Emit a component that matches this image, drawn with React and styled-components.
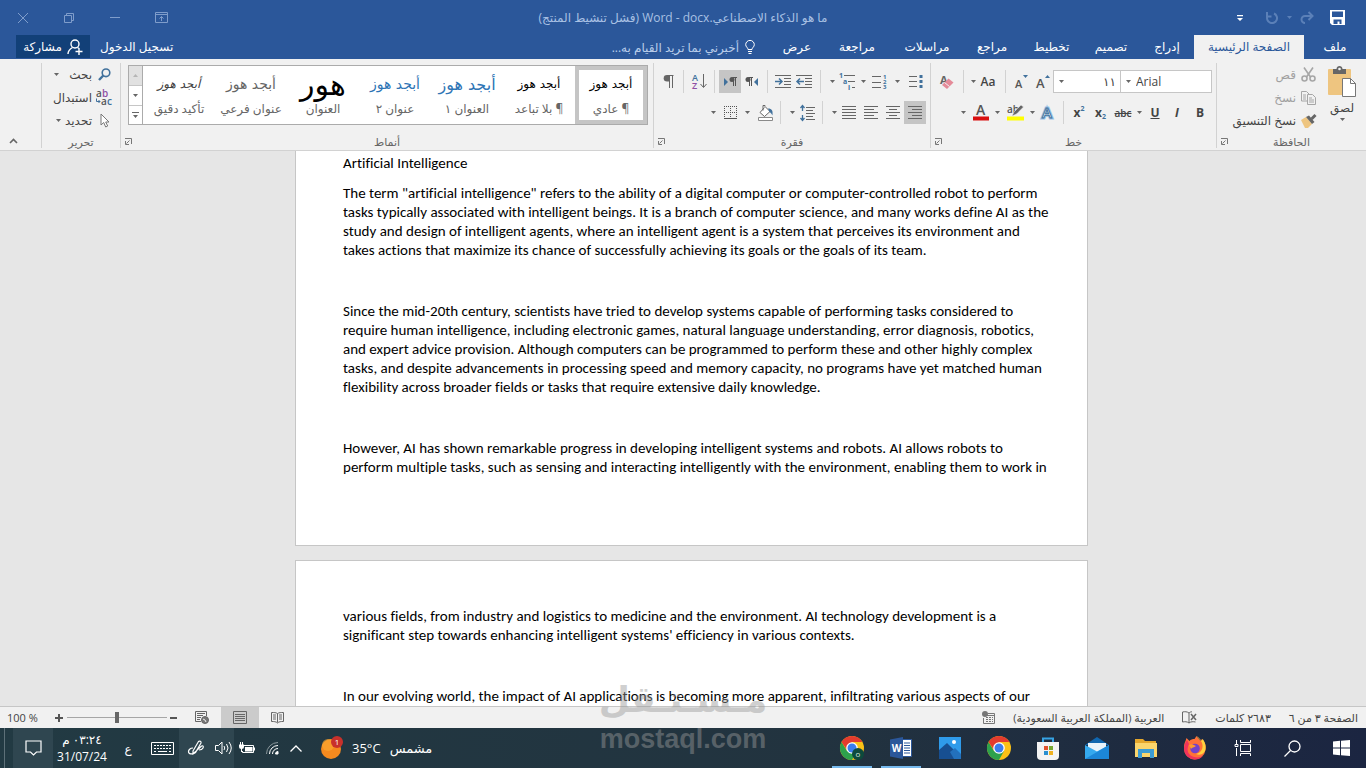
import React from "react";
import styled, { createGlobalStyle, css } from "styled-components";

const GlobalStyle = createGlobalStyle`
  * {
    box-sizing: border-box;
  }

  body {
    margin: 0;
    overflow: hidden;
    font-family: "Open Sans", "DejaVu Sans", sans-serif;
    font-size: 11px;
    color: #444;
  }

  button,
  input,
  select {
    margin: 0;
    padding: 0;
    border: 0;
    background: none;
    color: inherit;
    font: inherit;
  }

  svg {
    display: block;
    flex-shrink: 0;
    overflow: visible;
    direction: ltr;
  }
`;

/* ---------- shared ---------- */

const Arrow = () => (
  <svg width="5" height="3" viewBox="0 0 5 3">
    <path d="M0 0h5L2.5 3z" fill="#666" />
  </svg>
);

const Lines = ({ rows }) => (
  <svg width="16" height="13" viewBox="0 0 16 13" stroke="#666" fill="none">
    {rows.map(([from, to], i) => (
      <path key={i} d={`M${from} ${i * 3 + 0.5}H${to}`} />
    ))}
  </svg>
);

/* ---------- ribbon icons ---------- */

const PasteIcon = () => (
  <svg width="30" height="32" viewBox="0 0 30 32">
    <rect x="1" y="3" width="23" height="26" rx="1" fill="#eec580" />
    <path d="M6 3h3.500c0-4 6-4 6 0H19v5H6z" fill="#666" />
    <circle cx="12.500" cy="3" r="1.300" fill="#f1f1f1" />
    <path d="M15.500 12.500h8l5 5v13h-13z" fill="#fff" stroke="#777" />
    <path d="M23.500 12.500v5h5" fill="none" stroke="#777" />
  </svg>
);

const CutIcon = () => (
  <svg width="15" height="15" viewBox="0 0 15 15" fill="none" stroke="#a6a6a6" strokeWidth="1.600">
    <path d="M3 .5l6.500 9.500M12 .5L5.500 10" />
    <circle cx="3.500" cy="11.500" r="2.500" />
    <circle cx="11.500" cy="11.500" r="2.500" />
  </svg>
);

const CopyIcon = () => (
  <svg width="15" height="14" viewBox="0 0 15 14" fill="#f1f1f1" stroke="#a6a6a6">
    <path d="M.5.500h5l2.500 2.500v7H.5zM2 4h3M2 6h3M2 8h3" />
    <path d="M6.500 3.500h5l3 3v7h-8zM8 7h3M8 9h5M8 11h5" />
  </svg>
);

const BrushIcon = () => (
  <svg width="16" height="14" viewBox="0 0 16 14">
    <path d="M0 6l5-3 6 7-4 4H4z" fill="#eec580" />
    <path d="M5 3l3-1.500 5.500 6.500-2.500 2z" fill="#666" />
    <path d="M10.500 5l4-4" stroke="#666" strokeWidth="3" />
  </svg>
);

const EraserIcon = () => (
  <svg width="15" height="16" viewBox="0 0 15 16">
    <text x="1" y="10" fontSize="11" fontWeight="700" fill="#666">A</text>
    <path d="M9.500 4.500l5 4-6.500 6.500-5-4z" fill="#e48a98" />
    <path d="M5.500 8.500l5 4" stroke="#f1f1f1" />
  </svg>
);

const GrowIcon = ({ shrink }) => (
  <svg width="14" height="15" viewBox="0 0 14 15">
    <text x="0" y="14" fontSize={shrink ? 11 : 13} fontWeight="600" fill="#555">A</text>
    <path d={shrink ? "M8 1h5l-2.500 3z" : "M9 4h5l-2.500-3z"} fill="#41719c" />
  </svg>
);

const EffectsIcon = () => (
  <svg width="14" height="17" viewBox="0 0 14 17">
    <text x="2" y="14" fontSize="15" fontWeight="600" fill="#fff" stroke="#9cc3e6" strokeWidth="3">A</text>
    <text x="2" y="14" fontSize="15" fontWeight="600" fill="#fff" stroke="#41719c" strokeWidth="1">A</text>
  </svg>
);

const HighlightIcon = () => (
  <svg width="17" height="17" viewBox="0 0 17 17">
    <text x="0" y="9" fontSize="10" fontWeight="600" fill="#555">ab</text>
    <path d="M5 12l2-4 7-7 2.500 2-7 7z" fill="#666" stroke="#f1f1f1" strokeWidth=".5" />
    <path d="M0 12.500h17v4H0z" fill="#ff0" />
  </svg>
);

const FontColorIcon = () => (
  <svg width="16" height="17" viewBox="0 0 16 17">
    <text x="3" y="11" fontSize="14" fontWeight="600" fill="#555">A</text>
    <path d="M0 12.500h16v4H0z" fill="#d90f0f" />
  </svg>
);

const BulletsIcon = () => (
  <svg width="14" height="15" viewBox="0 0 14 15">
    <path d="M0 2.500h8M0 7.500h8M0 12.500h8" stroke="#666" />
    <path d="M10.500 1h3v3h-3zM10.500 6h3v3h-3zM10.500 11h3v3h-3z" fill="#41719c" />
  </svg>
);

const NumbersIcon = () => (
  <svg width="15" height="16" viewBox="0 0 15 16">
    <path d="M0 2.500h9M0 8.500h9M0 13.500h9" stroke="#666" />
    <g fontSize="6" fontWeight="700" fill="#41719c">
      <text x="11" y="5">1</text>
      <text x="11" y="10">2</text>
      <text x="11" y="15">3</text>
    </g>
  </svg>
);

const MultilevelIcon = () => (
  <svg width="17" height="17" viewBox="0 0 17 17">
    <path d="M5 2.500h11M9 8.500h7M13 14.500h3" stroke="#666" />
    <g fontSize="7" fontWeight="700" fill="#41719c">
      <text x="0" y="5">1</text>
      <text x="4" y="11">a</text>
      <text x="9" y="17">i</text>
    </g>
  </svg>
);

const IndentIcon = ({ right }) => (
  <svg width="16" height="14" viewBox="0 0 16 14" fill="none">
    <path d="M0 .5h16M9 3.500h7M9 6.500h7M9 9.500h7M0 12.500h16" stroke="#666" />
    <path d={right ? "M0 6.500h7M4 3.500l3 3-3 3" : "M8 6.500H1M4 3.500l-3 3 3 3"} stroke="#41719c" strokeWidth="1.500" />
  </svg>
);

const DirectionIcon = ({ ltr }) => (
  <svg width="13" height="12" viewBox="0 0 13 12">
    <g transform={ltr ? "translate(5 0)" : undefined}>
      <path d="M8 1.500H3.500M4.500 1.500V10M6.500 1.500V10" fill="none" stroke="#555" />
      <circle cx="3" cy="3.500" r="2.500" fill="#555" />
    </g>
    <path d={ltr ? "M0 2v8l4-4z" : "M13 2v8L9 6z"} fill="#41719c" />
  </svg>
);

const SortIcon = () => (
  <svg width="15" height="17" viewBox="0 0 15 17">
    <text x="0" y="8" fontSize="9" fontWeight="600" fill="#41719c">A</text>
    <text x="0" y="16" fontSize="9" fontWeight="600" fill="#8e4fa5">Z</text>
    <path d="M11.500 1v13M8.500 11l3 3.500 3-3.500" fill="none" stroke="#666" />
  </svg>
);

const PilcrowIcon = () => (
  <svg width="11" height="13" viewBox="0 0 11 13">
    <path d="M10.500.500H4M6.500.500V13M9.500.500V13" stroke="#666" fill="none" />
    <path d="M6 0H4a3.300 3.300 0 0 0 0 6.600h2z" fill="#666" />
  </svg>
);

const SpacingIcon = () => (
  <svg width="15" height="16" viewBox="0 0 15 16" fill="none">
    <path d="M6 2.500h9M6 5.500h7M6 8.500h9M6 11.500h7M6 14.500h9" stroke="#666" />
    <path d="M2.500 1v5M2.500 10v5M.5 3l2-2.500 2 2.500M.5 13l2 2.500 2-2.500" stroke="#41719c" strokeWidth="1.300" />
  </svg>
);

const BucketIcon = () => (
  <svg width="17" height="16" viewBox="0 0 17 16" fill="none">
    <path d="M7.500 2.500L3 7.500l4.500 4L13 6.500 8 1.500v-1H6v5" fill="#fff" stroke="#666" />
    <path d="M11 3.500c4 0 5 2 4.500 7-1-2-2-3-3-3.500z" fill="#41719c" />
    <path d="M1.500 12.500h14v3h-14z" fill="#fff" stroke="#8a8a8a" />
  </svg>
);

const BordersIcon = () => (
  <svg width="13" height="13" viewBox="0 0 13 13" fill="none" stroke="#555">
    <path d="M0 .5h13M.5 0v12M6.500 0v12M12.500 0v12M0 6.500h13" strokeDasharray="1 1" />
    <path d="M0 12.500h13" />
  </svg>
);

const FindIcon = () => (
  <svg width="13" height="13" viewBox="0 0 13 13" fill="none" stroke="#41719c">
    <circle cx="8" cy="4.800" r="3.800" strokeWidth="1.600" />
    <path d="M5.300 7.500L1 12" strokeWidth="2.400" />
  </svg>
);

const ReplaceIcon = () => (
  <svg width="17" height="17" viewBox="0 0 17 17" fontSize="10" fontWeight="600">
    <text x="0" y="8" fill="#555">a</text>
    <text x="6" y="8" fill="#8e4fa5">b</text>
    <text x="5" y="16" fill="#555">a</text>
    <text x="11" y="16" fill="#41719c">c</text>
    <path d="M.5 9.500v3H4M2.500 11L4 12.500 2.500 14" fill="none" stroke="#41719c" />
  </svg>
);

const PointerIcon = () => (
  <svg width="10" height="15" viewBox="0 0 10 15">
    <path d="M1 1v11l2.700-2.500 2 4.500 2-1-2-4h3.300z" fill="#fff" stroke="#777" />
  </svg>
);

const LauncherIcon = () => (
  <svg width="7" height="7" viewBox="0 0 7 7" fill="none" stroke="#777">
    <path d="M0 .5h6.500V6M.5 3v3.500H4M4.500 2.500L1.500 5.500" />
  </svg>
);

/* ---------- title bar and tabs ---------- */

const Screen = styled.div`
  position: relative;
  display: flex;
  flex-direction: column;
  height: 100vh;
  background: #e6e6e6;
`;

const TitleBar = styled.header`
  display: grid;
  grid-template-columns: 1fr auto 1fr;
  align-items: center;
  height: 35px;
  background: #2b579a;
  color: #a9c1e4;
`;

const QuickAccess = styled.div`
  display: flex;
  align-items: center;
  gap: 16px;
  height: 30px;
  padding-right: 21px;
`;

const UndoGroup = styled.div`
  display: flex;
  align-items: center;
  gap: 8px;
  padding-left: 6px;
`;

const WindowControls = styled.div`
  display: flex;
  justify-content: flex-end;
  height: 30px;
`;

const BarButton = styled.button`
  display: flex;
  align-items: center;
  justify-content: center;
  width: ${(props) => (props.$window ? "46px" : "auto")};
`;

const DocTitle = styled.h1`
  margin: 0;
  font-size: 12px;
  font-weight: 400;
  line-height: 35px;
  white-space: nowrap;
`;

const TabRow = styled.nav`
  display: flex;
  height: 24px;
  padding-left: 16px;
  background: #2b579a;
  color: #fff;
  font-size: 12px;
`;

const Tab = styled.button`
  width: ${(props) => props.$width}px;
  padding-bottom: 2px;
  white-space: nowrap;

  ${(props) =>
    props.$active &&
    css`
      background: #f1f1f1;
      color: #2b579a;
    `}
`;

const TellMe = styled.button`
  display: flex;
  align-items: center;
  gap: 6px;
  margin-right: 16px;
  color: #b9cdea;
  white-space: nowrap;
`;

const SignIn = styled.a`
  margin-right: auto;
  padding: 0 10px;
  color: #fff;
  line-height: 24px;
  text-decoration: none;
`;

const ShareButton = styled.button`
  display: flex;
  align-items: center;
  justify-content: center;
  gap: 5px;
  width: 74px;
  height: 23px;
  background: #124078;
`;

const tabs = [
  { label: "ملف", width: 62 },
  { label: "الصفحة الرئيسية", width: 110, active: true },
  { label: "إدراج", width: 54 },
  { label: "تصميم", width: 58 },
  { label: "تخطيط", width: 61 },
  { label: "مراجع", width: 58 },
  { label: "مراسلات", width: 72 },
  { label: "مراجعة", width: 68 },
  { label: "عرض", width: 52 },
];

const TopBar = () => (
  <>
    <TitleBar>
      <QuickAccess>
        <BarButton aria-label="حفظ">
          <svg width="15" height="15" viewBox="0 0 15 15">
            <path d="M0 0h15v15H2l-2-2z" fill="#fff" />
            <path d="M2 1.500h11V7H2zM3.500 9.500h8V14h-2v-2.500h-2V14h-4z" fill="#2b579a" />
          </svg>
        </BarButton>
        <UndoGroup>
          <BarButton aria-label="إعادة">
            <svg width="14" height="13" viewBox="0 0 14 13" fill="none" stroke="#5b80b8" strokeWidth="2">
              <path d="M8.500 1l4 4-4 4M12 5H5a3.500 3.500 0 0 0 0 7" />
            </svg>
          </BarButton>
          <svg width="5" height="3" viewBox="0 0 5 3">
            <path d="M0 0h5L2.500 3z" fill="#5b80b8" />
          </svg>
          <BarButton aria-label="تراجع">
            <svg width="14" height="14" viewBox="0 0 14 14" fill="none" stroke="#5b80b8" strokeWidth="2">
              <path d="M2 1v4.500h4.500M2.500 5A5 5 0 1 0 9 2.500" />
            </svg>
          </BarButton>
        </UndoGroup>
        <BarButton aria-label="تخصيص">
          <svg width="6" height="8" viewBox="0 0 6 8">
            <path d="M0 1h6v1.200H0zM0 4h6L3 7z" fill="#fff" />
          </svg>
        </BarButton>
      </QuickAccess>
      <DocTitle>{"ما هو الذكاء الاصطناعي.\u200fdocx\u200f - \u200fWord\u200f (فشل تنشيط المنتج)"}</DocTitle>
      <WindowControls>
        <BarButton $window aria-label="خيارات عرض الشريط">
          <svg width="13" height="11" viewBox="0 0 13 11" fill="none" stroke="#7f9dcb">
            <path d="M.5.500h12v10H.5zM.5 2.500h12M6.500 9V4.500M4.500 6.500l2-2 2 2" />
          </svg>
        </BarButton>
        <BarButton $window aria-label="تصغير">
          <svg width="10" height="1" viewBox="0 0 10 1">
            <path d="M0 .5h10" stroke="#7f9dcb" />
          </svg>
        </BarButton>
        <BarButton $window aria-label="استعادة">
          <svg width="10" height="10" viewBox="0 0 10 10" fill="none" stroke="#7f9dcb">
            <path d="M.5 2.500h7v7h-7zM2.500 2.500v-2h7v7h-2" />
          </svg>
        </BarButton>
        <BarButton $window aria-label="إغلاق">
          <svg width="10" height="10" viewBox="0 0 10 10">
            <path d="M0 0l10 10M10 0L0 10" stroke="#7f9dcb" />
          </svg>
        </BarButton>
      </WindowControls>
    </TitleBar>
    <TabRow>
      {tabs.map((tab) => (
        <Tab key={tab.label} $width={tab.width} $active={tab.active}>
          {tab.label}
        </Tab>
      ))}
      <TellMe>
        <svg width="10" height="14" viewBox="0 0 10 14" fill="none" stroke="#fff">
          <path d="M3 9.500C3 7.500.700 7 .700 4.700a4.300 4.300 0 0 1 8.600 0C9.300 7 7 7.500 7 9.500zM3 11.500h4M3.500 13.500h3" />
        </svg>
        أخبرني بما تريد القيام به...
      </TellMe>
      <SignIn href="#signin">تسجيل الدخول</SignIn>
      <ShareButton>
        <svg width="16" height="16" viewBox="0 0 16 16" fill="none" stroke="#fff" strokeWidth="1.400">
          <circle cx="8" cy="5" r="4" />
          <path d="M1 15c0-3.500 2-5 4.500-6.500M10.500 8.500l1.500 1M8.500 12.500h7M12 9v7" />
        </svg>
        مشاركة
      </ShareButton>
    </TabRow>
  </>
);

/* ---------- ribbon ---------- */

const RibbonBar = styled.section`
  display: flex;
  height: 92px;
  padding: 4px 0 2px;
  background: #f1f1f1;
  border-bottom: 1px solid #d2d2d2;
`;

const GroupBox = styled.div`
  display: flex;
  flex-direction: column;
  flex: ${(props) => (props.$grow ? "1" : "none")};
  padding: 0 4px;
  border-left: 1px solid #d2d2d2;
`;

const GroupBody = styled.div`
  display: flex;
  flex: 1;
`;

const GroupFooter = styled.div`
  display: grid;
  grid-template-columns: 1fr auto 1fr;
  align-items: center;
  justify-items: end;
  height: 14px;
  color: #666;
`;

const FooterLabel = styled.span`
  grid-column: 2;
`;

const ToolRows = styled.div`
  display: flex;
  flex-direction: column;
  gap: 8px;
  padding-top: 7px;
`;

const ToolRow = styled.div`
  display: flex;
  height: 23px;
`;

const Tool = styled.button`
  display: flex;
  align-items: center;
  justify-content: center;
  width: ${(props) => props.$width}px;
  font-size: ${(props) => (props.$small ? 10 : 12)}px;
  font-weight: ${(props) => (props.$light ? 600 : 700)};
  background: ${(props) => (props.$active ? "#c5c5c5" : "none")};
  text-decoration: ${(props) => props.$line || "none"};
  font-style: ${(props) => (props.$italic ? "italic" : "normal")};

  sub,
  sup {
    color: #41719c;
    font-size: 7px;
    line-height: 1;
  }

  sub {
    align-self: flex-end;
    padding-bottom: 4px;
  }

  sup {
    align-self: flex-start;
    padding-top: 4px;
  }
`;

const Divider = styled.span`
  display: flex;
  justify-content: center;
  width: ${(props) => props.$width}px;

  &::before {
    content: "";
    width: 1px;
    background: #d2d2d2;
  }
`;

const SelectBox = styled.label`
  display: flex;
  flex-direction: ${(props) => (props.$flip ? "row-reverse" : "row")};
  align-items: center;
  gap: 5px;
  width: ${(props) => props.$width}px;
  padding: 0 4px 0 5px;
  background: #fff;
  border: 1px solid #c6c6c6;

  & + & {
    border-right: 0;
  }

  select {
    flex: 1;
    min-width: 0;
    appearance: none;
    outline: 0;
    font-size: 12px;
  }
`;

const CommandList = styled.div`
  display: flex;
  flex-direction: column;
`;

const Command = styled.button`
  display: flex;
  align-items: center;
  gap: 4px;
  height: 23px;
  color: ${(props) => (props.$disabled ? "#a0a0a0" : "#444")};
  font-size: 12px;
  white-space: nowrap;
`;

const CommandIcon = styled.span`
  display: flex;
  justify-content: center;
  width: 17px;
`;

const ClipboardList = styled(CommandList)`
  width: 96px;
`;

const PasteButton = styled.button`
  display: flex;
  flex-direction: column;
  align-items: center;
  gap: 2px;
  width: 40px;
  padding-top: 3px;
  margin-left: 5px;
  font-size: 12px;
  line-height: 16px;
`;

const StylesGallery = styled.div`
  display: flex;
  flex: 1;
  height: 60px;
  margin: 2px 1px 0 3px;
  background: #fff;
  border: 1px solid #ababab;
`;

const StyleCard = styled.button`
  display: flex;
  flex: 1;
  flex-direction: column;
  align-items: center;
  min-width: 0;
  border: 4px solid ${(props) => (props.$active ? "#c5c5c5" : "transparent")};
  color: #666;
  font-size: 12px;
  white-space: nowrap;
`;

const Sample = styled.span`
  display: flex;
  align-items: center;
  height: 28px;
  font-family: "DejaVu Sans", sans-serif;
  font-size: ${(props) => props.$size}px;
  color: ${(props) => props.$color};
  font-style: ${(props) => (props.$italic ? "italic" : "normal")};
`;

const StyleName = styled.span`
  line-height: 22px;
`;

const Scroller = styled.div`
  display: grid;
  grid-template-rows: repeat(3, 1fr);
  width: 14px;
  border-right: 1px solid #ababab;
`;

const ScrollButton = styled.button`
  display: flex;
  align-items: center;
  justify-content: center;
  background: ${(props) => (props.$off ? "#e1e1e1" : "#fff")};

  & + & {
    border-top: 1px solid #c6c6c6;
  }
`;

const CollapseArea = styled.div`
  display: flex;
  align-items: flex-end;
  justify-content: flex-end;
  width: 41px;
  padding: 0 0 4px 9px;
`;

const styleCards = [
  { name: "¶ عادي", sample: "أبجد هوز", size: 12, color: "#000", active: true },
  { name: "¶ بلا تباعد", sample: "أبجد هوز", size: 12, color: "#000" },
  { name: "العنوان ١", sample: "أبجد هوز", size: 16, color: "#2e74b5" },
  { name: "عنوان ٢", sample: "أبجد هوز", size: 14, color: "#2e74b5" },
  { name: "العنوان", sample: "هور", size: 30, color: "#000" },
  { name: "عنوان فرعي", sample: "أبجد هوز", size: 14, color: "#666" },
  { name: "تأكيد دقيق", sample: "أبجد هوز", size: 12, color: "#404040", italic: true },
];

const Group = ({ title, launcher = true, grow, children }) => (
  <GroupBox $grow={grow}>
    <GroupBody>{children}</GroupBody>
    <GroupFooter>
      <FooterLabel>{title}</FooterLabel>
      {launcher && (
        <button aria-label={`خيارات ${title}`}>
          <LauncherIcon />
        </button>
      )}
    </GroupFooter>
  </GroupBox>
);

const ArrowTool = ({ width, label }) => (
  <Tool $width={width} aria-label={label}>
    <Arrow />
  </Tool>
);

const ClipboardGroup = () => (
  <Group title="الحافظة">
    <PasteButton>
      <PasteIcon />
      لصق
      <Arrow />
    </PasteButton>
    <ClipboardList>
      <Command $disabled>
        <CommandIcon><CutIcon /></CommandIcon>
        قص
      </Command>
      <Command $disabled>
        <CommandIcon><CopyIcon /></CommandIcon>
        نسخ
      </Command>
      <Command>
        <CommandIcon><BrushIcon /></CommandIcon>
        نسخ التنسيق
      </Command>
    </ClipboardList>
  </Group>
);

const FontGroup = () => (
  <Group title="خط">
    <ToolRows>
      <ToolRow>
        <SelectBox $width={92} $flip dir="ltr">
          <select aria-label="نوع الخط">
            <option>Arial</option>
          </select>
          <Arrow />
        </SelectBox>
        <SelectBox $width={67}>
          <select aria-label="حجم الخط">
            <option>١١</option>
          </select>
          <Arrow />
        </SelectBox>
        <Tool $width={20} aria-label="تكبير الخط"><GrowIcon /></Tool>
        <Tool $width={22} aria-label="تصغير الخط"><GrowIcon shrink /></Tool>
        <Divider $width={12} />
        <Tool $width={22} $light>Aa</Tool>
        <ArrowTool width={8} label="حالة الأحرف" />
        <Divider $width={12} />
        <Tool $width={22} aria-label="مسح التنسيق"><EraserIcon /></Tool>
      </ToolRow>
      <ToolRow>
        <Tool $width={24}>B</Tool>
        <Tool $width={22} $italic>I</Tool>
        <Tool $width={22} $line="underline">U</Tool>
        <ArrowTool width={10} label="تسطير" />
        <Tool $width={22} $line="line-through" $small $light>abc</Tool>
        <Tool $width={23} dir="ltr">x<sub>2</sub></Tool>
        <Tool $width={20} dir="ltr">x<sup>2</sup></Tool>
        <Divider $width={11} />
        <Tool $width={22} aria-label="تأثيرات النص"><EffectsIcon /></Tool>
        <ArrowTool width={8} label="خيارات التأثيرات" />
        <Tool $width={26} aria-label="تمييز"><HighlightIcon /></Tool>
        <ArrowTool width={10} label="ألوان التمييز" />
        <Tool $width={22} aria-label="لون الخط"><FontColorIcon /></Tool>
        <ArrowTool width={14} label="ألوان الخط" />
      </ToolRow>
    </ToolRows>
  </Group>
);

const ParagraphGroup = () => (
  <Group title="فقرة">
    <ToolRows>
      <ToolRow>
        <Tool $width={20} aria-label="تعداد نقطي"><BulletsIcon /></Tool>
        <ArrowTool width={18} label="خيارات النقاط" />
        <Tool $width={18} aria-label="تعداد رقمي"><NumbersIcon /></Tool>
        <ArrowTool width={14} label="خيارات الأرقام" />
        <Tool $width={18} aria-label="قائمة متعددة"><MultilevelIcon /></Tool>
        <ArrowTool width={12} label="خيارات القائمة" />
        <Divider $width={12} />
        <Tool $width={20} aria-label="إنقاص المسافة"><IndentIcon /></Tool>
        <Tool $width={22} aria-label="زيادة المسافة"><IndentIcon right /></Tool>
        <Divider $width={10} />
        <Tool $width={21} aria-label="من اليمين"><DirectionIcon /></Tool>
        <Tool $width={22} $active aria-label="من اليسار"><DirectionIcon ltr /></Tool>
        <Divider $width={9} />
        <Tool $width={22} aria-label="فرز"><SortIcon /></Tool>
        <Divider $width={10} />
        <Tool $width={20} aria-label="علامات الفقرات"><PilcrowIcon /></Tool>
      </ToolRow>
      <ToolRow>
        <Tool $width={22} $active aria-label="محاذاة لليمين">
          <Lines rows={[[1, 15], [5, 15], [1, 15], [5, 15], [1, 15]]} />
        </Tool>
        <Tool $width={22} aria-label="توسيط">
          <Lines rows={[[1, 15], [4, 12], [1, 15], [4, 12], [1, 15]]} />
        </Tool>
        <Tool $width={22} aria-label="محاذاة لليسار">
          <Lines rows={[[1, 15], [1, 11], [1, 15], [1, 11], [1, 15]]} />
        </Tool>
        <Tool $width={22} aria-label="ضبط">
          <Lines rows={[[1, 15], [1, 15], [1, 15], [1, 15], [1, 15]]} />
        </Tool>
        <ArrowTool width={8} label="خيارات الضبط" />
        <Divider $width={15} />
        <Tool $width={16} aria-label="تباعد الأسطر"><SpacingIcon /></Tool>
        <ArrowTool width={14} label="خيارات التباعد" />
        <Divider $width={10} />
        <Tool $width={20} aria-label="تظليل"><BucketIcon /></Tool>
        <ArrowTool width={16} label="ألوان التظليل" />
        <Tool $width={18} aria-label="حدود"><BordersIcon /></Tool>
        <ArrowTool width={16} label="خيارات الحدود" />
      </ToolRow>
    </ToolRows>
  </Group>
);

const StylesGroup = () => (
  <Group title="أنماط" grow>
    <StylesGallery>
      {styleCards.map((card) => (
        <StyleCard key={card.name} $active={card.active}>
          <Sample $size={card.size} $color={card.color} $italic={card.italic}>
            {card.sample}
          </Sample>
          <StyleName>{card.name}</StyleName>
        </StyleCard>
      ))}
      <Scroller>
        <ScrollButton $off aria-label="أعلى">
          <svg width="5" height="3" viewBox="0 0 5 3">
            <path d="M0 3h5L2.500 0z" fill="#b5b5b5" />
          </svg>
        </ScrollButton>
        <ScrollButton aria-label="أسفل"><Arrow /></ScrollButton>
        <ScrollButton aria-label="المزيد">
          <svg width="7" height="6" viewBox="0 0 7 6">
            <path d="M0 0h7v1H0zM1 3h5L3.500 6z" fill="#666" />
          </svg>
        </ScrollButton>
      </Scroller>
    </StylesGallery>
  </Group>
);

const EditingList = styled(CommandList)`
  width: 70px;
  padding-right: 3px;
`;

const EditingGroup = () => (
  <Group title="تحرير" launcher={false}>
    <EditingList>
      <Command>
        <CommandIcon><FindIcon /></CommandIcon>
        بحث
        <CommandIcon><Arrow /></CommandIcon>
      </Command>
      <Command>
        <CommandIcon><ReplaceIcon /></CommandIcon>
        استبدال
      </Command>
      <Command>
        <CommandIcon><PointerIcon /></CommandIcon>
        تحديد
        <Arrow />
      </Command>
    </EditingList>
  </Group>
);

const Ribbon = () => (
  <RibbonBar>
    <ClipboardGroup />
    <FontGroup />
    <ParagraphGroup />
    <StylesGroup />
    <EditingGroup />
    <CollapseArea>
      <button aria-label="طي الشريط">
        <svg width="9" height="6" viewBox="0 0 9 6">
          <path d="M1 5l3.500-3.500L8 5" fill="none" stroke="#666" strokeWidth="1.600" />
        </svg>
      </button>
    </CollapseArea>
  </RibbonBar>
);

/* ---------- document ---------- */

const Workspace = styled.main`
  display: flex;
  flex: 1;
  flex-direction: column;
  align-items: center;
  gap: 14px;
  min-height: 0;
  padding-left: 17px;
  overflow: hidden;
`;

const Page = styled.article`
  flex: none;
  width: 793px;
  max-width: 100%;
  padding: ${(props) => (props.$first ? "3px 47px 57px" : "46px 47px")};
  background: #fff;
  border: 1px solid #c6c6c6;
  border-top-width: ${(props) => (props.$first ? "0" : "1px")};
  font-family: Carlito, Lato, sans-serif;
  font-size: 15px;
  font-variant-ligatures: none;
  line-height: 19px;
  color: #000;
`;

const Paragraph = styled.p`
  margin: 0 0 11px;
  white-space: pre;
`;

const BlankLine = styled.div`
  height: 20px;
  margin-bottom: 11px;
`;

const pageOne = [
  ["Artificial Intelligence"],
  [
    'The term "artificial intelligence" refers to the ability of a digital computer or computer-controlled robot to perform',
    "tasks typically associated with intelligent beings. It is a branch of computer science, and many works define AI as the",
    "study and design of intelligent agents, where an intelligent agent is a system that perceives its environment and",
    "takes actions that maximize its chance of successfully achieving its goals or the goals of its team.",
  ],
  [],
  [
    "Since the mid-20th century, scientists have tried to develop systems capable of performing tasks considered to",
    "require human intelligence, including electronic games, natural language understanding, error diagnosis, robotics,",
    "and expert advice provision. Although computers can be programmed to perform these and other highly complex",
    "tasks, and despite advancements in processing speed and memory capacity, no programs have yet matched human",
    "flexibility across broader fields or tasks that require extensive daily knowledge.",
  ],
  [],
  [
    "However, AI has shown remarkable progress in developing intelligent systems and robots. AI allows robots to",
    "perform multiple tasks, such as sensing and interacting intelligently with the environment, enabling them to work in",
  ],
];

const pageTwo = [
  [
    "various fields, from industry and logistics to medicine and the environment. AI technology development is a",
    "significant step towards enhancing intelligent systems' efficiency in various contexts.",
  ],
  [],
  ["In our evolving world, the impact of AI applications is becoming more apparent, infiltrating various aspects of our"],
];

const Text = ({ blocks }) =>
  blocks.map((lines, i) =>
    lines.length ? <Paragraph key={i}>{lines.join("\n")}</Paragraph> : <BlankLine key={i} />
  );

/* ---------- status bar ---------- */

const StatusBar = styled.footer`
  display: flex;
  align-items: center;
  height: 22px;
  padding: 0 8px 0 7px;
  background: #f1f1f1;
  border-top: 1px solid #c6c6c6;
  white-space: nowrap;
`;

const StatusItems = styled.div`
  display: flex;
  align-items: center;
  gap: 18px;
`;

const ViewButtons = styled.div`
  display: flex;
  align-self: stretch;
  margin-right: auto;
`;

const ViewButton = styled.button`
  display: flex;
  align-items: center;
  justify-content: center;
  width: 38px;
  background: ${(props) => (props.$active ? "#cbcbcb" : "none")};
`;

const Zoom = styled.div`
  display: flex;
  align-items: center;
  gap: 3px;
  padding-right: 5px;
`;

const ZoomSlider = styled.input`
  width: 100px;
  height: 12px;
  appearance: none;
  background: linear-gradient(#a6a6a6, #a6a6a6) center / 100% 1px no-repeat;

  &::-webkit-slider-thumb {
    appearance: none;
    width: 4px;
    height: 11px;
    background: #666;
  }
`;

const ZoomValue = styled.button`
  margin-right: 14px;
`;

const Status = () => (
  <StatusBar>
    <StatusItems>
      <span>الصفحة ٣ من ٦</span>
      <span>٢٦٨٣ كلمات</span>
      <svg width="15" height="13" viewBox="0 0 15 13" fill="none" stroke="#666">
        <path d="M7 2C5 .5 3 .5 .5 1v10c2.500-.5 4.500-.5 6.500 1 2-1.500 4-1.500 6.500-1M7 2v10M7 2c1-1 2-1.200 3-1.200" />
        <path d="M9 3l5 6M14 3L9 9" strokeWidth="1.500" />
      </svg>
      <span>العربية (المملكة العربية السعودية)</span>
      <svg width="13" height="13" viewBox="0 0 13 13" fill="none" stroke="#777">
        <path d="M6 2.500h6.500v10h-11V7M1.500 4.500h11" />
        <path d="M4 6.500h7M4 8.500h7M4 10.500h7" strokeDasharray="2 1" />
        <circle cx="3" cy="3" r="3" fill="#777" stroke="none" />
      </svg>
    </StatusItems>
    <ViewButtons>
      <ViewButton aria-label="وضع القراءة">
        <svg width="13" height="12" viewBox="0 0 13 12" fill="none" stroke="#666">
          <path d="M6.500 1.500C5 .5 3 .5.500.500v9c2.500 0 4.500 0 6 1.500 1.500-1.500 3.500-1.500 6-1.500v-9c-2.500 0-4.500 0-6 1zv9M2 3h3M2 5h3M2 7h3M8 3h3M8 5h3M8 7h3" />
        </svg>
      </ViewButton>
      <ViewButton $active aria-label="تخطيط الطباعة">
        <svg width="14" height="13" viewBox="0 0 14 13" fill="none" stroke="#666">
          <path d="M.5.500h13v12H.5zM2 3.500h10M2 5.500h10M2 7.500h10M2 9.500h10" />
        </svg>
      </ViewButton>
      <ViewButton aria-label="تخطيط ويب">
        <svg width="14" height="13" viewBox="0 0 14 13" fill="none" stroke="#666">
          <path d="M6 10.500H.5v-10h11V5M2 2.500h8M2 4.500h6M2 6.500h4M2 8.500h3" />
          <circle cx="10" cy="9" r="3.500" fill="#777" />
          <path d="M8 8l2 1 1 2" stroke="#eee" />
        </svg>
      </ViewButton>
    </ViewButtons>
    <Zoom>
      <button aria-label="تصغير العرض">
        <svg width="8" height="8" viewBox="0 0 8 8"><path d="M0 4h7" stroke="#555" strokeWidth="2" /></svg>
      </button>
      <ZoomSlider type="range" defaultValue="50" aria-label="تكبير/تصغير" />
      <button aria-label="تكبير العرض">
        <svg width="9" height="8" viewBox="0 0 9 8"><path d="M0 4h8M4 0v8" stroke="#555" strokeWidth="2" /></svg>
      </button>
      <ZoomValue dir="ltr">100 %</ZoomValue>
    </Zoom>
  </StatusBar>
);

/* ---------- taskbar ---------- */

const TaskbarRow = styled.footer`
  display: flex;
  align-items: stretch;
  justify-content: space-between;
  height: 40px;
  background: linear-gradient(to right, #223a43, #22333f 60%, #1b2541);
  color: #fff;
`;

const Apps = styled.div`
  display: flex;
`;

const AppButton = styled.button`
  display: flex;
  align-items: center;
  justify-content: center;
  width: 49px;
  background: ${(props) =>
    props.$open ? "linear-gradient(#76b9ed, #76b9ed) center bottom / 40px 2px no-repeat" : "none"};
`;

const Tray = styled.div`
  display: flex;
  align-items: stretch;
  padding-left: 8px;
  margin-left: 4px;
  border-left: 1px solid #5d7078;
`;

const TrayButton = styled.button`
  display: flex;
  align-items: center;
  justify-content: center;
  width: ${(props) => props.$width}px;
  background: ${(props) => (props.$lit ? "#2f4650" : "none")};
  font-size: 12px;
`;

const Clock = styled.button`
  display: flex;
  flex-direction: column;
  align-items: center;
  justify-content: center;
  width: 58px;
  font-size: 12px;
  line-height: 17px;
`;

const Weather = styled.button`
  display: flex;
  align-items: center;
  gap: 9px;
  margin-left: 13px;
  font-size: 13px;
`;

const ChromeIcon = ({ badge }) => (
  <svg width="24" height="24" viewBox="0 0 24 24">
    <circle cx="12" cy="12" r="12" fill="#fbc116" />
    <path d="M12 12l5 3-5 9A12 12 0 0 1 1.600 6L7 15z" fill="#2da14c" />
    <path d="M1.600 6A12 12 0 0 1 22.400 6H12L7 14z" fill="#e33b2e" />
    <circle cx="12" cy="12" r="5.800" fill="#fff" />
    <circle cx="12" cy="12" r="4.500" fill="#3b7ded" />
    {badge && (
      <>
        <circle cx="18" cy="18" r="6" fill="#0d4a3c" />
        <text x="18" y="21" textAnchor="middle" fontSize="8" fill="#cfe5dc">o</text>
      </>
    )}
  </svg>
);

const WordIcon = () => (
  <svg width="22" height="22" viewBox="0 0 22 22">
    <path d="M11 2.500h10.500v17H11z" fill="#fff" stroke="#2b579a" />
    <path d="M14 6h6M14 8.500h6M14 11h6M14 13.500h6M14 16h6" stroke="#2b579a" />
    <path d="M0 2.500L13 0v22L0 19.500z" fill="#2b579a" />
    <text x="6.500" y="15" textAnchor="middle" fontSize="10" fontWeight="700" fill="#fff">W</text>
  </svg>
);

const PhotosIcon = () => (
  <svg width="22" height="22" viewBox="0 0 22 22">
    <path d="M0 0h22v22H0z" fill="#2f9bea" />
    <path d="M0 13l8-7 14 14v2H0z" fill="#174f91" />
    <path d="M11 15l5-4 6 6v5h-7z" fill="#2371bd" />
    <circle cx="15" cy="5" r="2" fill="#fff" />
  </svg>
);

const StoreIcon = () => (
  <svg width="24" height="23" viewBox="0 0 24 23">
    <path d="M7 6V1.500h10V6" fill="none" stroke="#36a3e4" strokeWidth="2" />
    <path d="M1 5h22v14a4 4 0 0 1-4 4H5a4 4 0 0 1-4-4z" fill="#f3f3f3" />
    <path d="M8 9h4v4H8z" fill="#e2522c" />
    <path d="M13 9h4v4h-4z" fill="#76a832" />
    <path d="M8 14h4v4H8z" fill="#2a8fd0" />
    <path d="M13 14h4v4h-4z" fill="#efb11f" />
  </svg>
);

const MailIcon = () => (
  <svg width="24" height="22" viewBox="0 0 24 22">
    <path d="M0 8l12-8 12 8z" fill="#1067b0" />
    <path d="M3 6h18v6l-9 5-9-5z" fill="#e8f3fb" />
    <path d="M0 8l12 6.500L24 8v14H0z" fill="#35a9ee" />
    <path d="M0 22L24 8v14z" fill="#1c87d8" />
  </svg>
);

const ExplorerIcon = () => (
  <svg width="22" height="19" viewBox="0 0 22 19">
    <path d="M0 0h8l2 2h11v6H0z" fill="#e5a72c" />
    <path d="M0 4h22v14H0z" fill="#fbd56c" />
    <path d="M3 10h16v9h-4v-5H7v5H3z" fill="#3c9cd4" />
  </svg>
);

const FirefoxIcon = () => (
  <svg width="24" height="24" viewBox="0 0 24 24">
    <path d="M2.500 5l1-3 3 3c1-1.500 3-2 5-2l2-3c1 2 3 3 4 5l1.500-2c3 3 4.500 7 3.500 11A10.800 10.800 0 0 1 1 13C1 10 1 8 2.500 5z" fill="#ff7139" />
    <path d="M14 0c1 3 5 4 5.500 9S17 17 13 18c5 2 9-1 9.500-5 .6-4-1-8-3-10l-1 2c-1-2-3-3-4.500-5z" fill="#ffd23e" />
    <path d="M1 13a11 11 0 0 0 19 7c-6 3-13 1-15-4C4 13 5 10 6 8L4 4c-2 3-3 6-3 9z" fill="#f0335c" />
    <circle cx="12" cy="12.500" r="4.800" fill="#7542c9" />
    <path d="M6 9c3-2 5 0 7 1-2 2-4 1-5 3z" fill="#ff9a2e" />
  </svg>
);

const Taskbar = () => (
  <TaskbarRow>
    <Apps>
      <AppButton aria-label="ابدأ">
        <svg width="17" height="16" viewBox="0 0 17 16" fill="#fff">
          <path d="M0 1.500L7 .8v6.700H0zM8 .7l9-.7v7.500H8zM0 8.500h7v6.700l-7-.7zM8 8.500h9V16l-9-.7z" />
        </svg>
      </AppButton>
      <AppButton aria-label="بحث">
        <svg width="17" height="17" viewBox="0 0 17 17" fill="none" stroke="#fff" strokeWidth="1.300">
          <circle cx="10.500" cy="6.500" r="5.500" />
          <path d="M6.500 10.500L.5 16.500" />
        </svg>
      </AppButton>
      <AppButton aria-label="عرض المهام">
        <svg width="17" height="16" viewBox="0 0 17 16" fill="none" stroke="#fff">
          <path d="M5.500 4.500h10v7h-10zM5.500 0v2.500h10V0M5.500 16v-2.500h10V16M1.500 0v4M1.500 8v8M0 4.500h3v2H0z" />
        </svg>
      </AppButton>
      <AppButton aria-label="Firefox"><FirefoxIcon /></AppButton>
      <AppButton aria-label="مستكشف الملفات"><ExplorerIcon /></AppButton>
      <AppButton aria-label="البريد"><MailIcon /></AppButton>
      <AppButton aria-label="المتجر"><StoreIcon /></AppButton>
      <AppButton aria-label="Chrome"><ChromeIcon /></AppButton>
      <AppButton aria-label="الصور"><PhotosIcon /></AppButton>
      <AppButton $open aria-label="Word"><WordIcon /></AppButton>
      <AppButton $open aria-label="Chrome 2"><ChromeIcon badge /></AppButton>
    </Apps>
    <Tray>
      <Weather>
        <span>مشمس</span>
        <span dir="ltr">35°C</span>
        <svg width="22" height="24" viewBox="0 0 22 24">
          <circle cx="10" cy="13" r="10" fill="#f58a1f" />
          <circle cx="7" cy="9" r="6" fill="#fbab34" opacity=".6" />
          <circle cx="16" cy="6" r="6" fill="#c8312b" />
          <text x="16" y="9" textAnchor="middle" fontSize="8" fill="#fff">1</text>
        </svg>
      </Weather>
      <TrayButton $width={24} aria-label="إظهار الرموز">
        <svg width="12" height="7" viewBox="0 0 12 7">
          <path d="M.5 6.500L6 1l5.500 5.500" fill="none" stroke="#fff" strokeWidth="1.300" />
        </svg>
      </TrayButton>
      <TrayButton $width={24} aria-label="الشبكة">
        <svg width="12" height="12" viewBox="0 0 12 12" fill="none" stroke="#fff">
          <path d="M.5 12A11.500 11.500 0 0 1 12 .5" stroke="#8b989d" />
          <path d="M3.500 12A8.500 8.500 0 0 1 12 3.500M6.500 12A5.500 5.500 0 0 1 12 6.500" />
          <path d="M9.500 12A2.500 2.500 0 0 1 12 9.500V12z" fill="#fff" />
        </svg>
      </TrayButton>
      <TrayButton $width={26} aria-label="البطارية">
        <svg width="16" height="12" viewBox="0 0 16 12" fill="none" stroke="#fff">
          <path d="M5 3.500h9.500v7h-11V9M15.500 5.500v3" />
          <path d="M6 5h7.500v4.500H6zM0 2.500h5v2a2.500 2.500 0 0 1-5 0z" fill="#fff" stroke="none" />
          <path d="M1.500 0v3M3.500 0v3M2.500 6v4" />
        </svg>
      </TrayButton>
      <TrayButton $width={22} $lit aria-label="الصوت">
        <svg width="17" height="14" viewBox="0 0 17 14" fill="none" stroke="#fff">
          <path d="M.5 4.500h3l3.500-3.500v12l-3.500-3.500h-3zM9 5q1.500 2 0 4M11.500 3q3 4 0 8M14 1q4.500 6 0 12" />
        </svg>
      </TrayButton>
      <TrayButton $width={33} $lit aria-label="القلم">
        <svg width="16" height="16" viewBox="0 0 16 16" fill="none" stroke="#fff" strokeWidth="1.200">
          <path d="M5 11L10.500 1.500a1.500 1.500 0 0 1 2.500 1.500L7.500 12.500 5 14zM5 8C2 8 .5 10 .5 11.500c0 3 4 3 6 1s5-4.500 6.500-6 3-.5 2 1.500-3 2-4 2" />
        </svg>
      </TrayButton>
      <TrayButton $width={34} aria-label="لوحة المفاتيح">
        <svg width="23" height="13" viewBox="0 0 23 13" fill="none" stroke="#fff">
          <path d="M.5.500h22v12H.5z" />
          <path d="M3 3.500h17M3 6.500h17" strokeDasharray="2 1" />
          <path d="M3 9.500h2M7 9.500h9M18 9.500h2" />
        </svg>
      </TrayButton>
      <TrayButton $width={34}>ع</TrayButton>
      <Clock>
        <span>٠٣:٢٤ م</span>
        <span dir="ltr">31/07/24</span>
      </Clock>
      <TrayButton $width={40} $lit aria-label="الإشعارات">
        <svg width="17" height="16" viewBox="0 0 17 16" fill="none" stroke="#fff" strokeWidth="1.200">
          <path d="M1 1h15v11h-4.500L8.500 15l-3-3H1z" />
        </svg>
      </TrayButton>
    </Tray>
  </TaskbarRow>
);

/* ---------- watermark ---------- */

const Watermark = styled.div`
  position: absolute;
  bottom: 14px;
  left: 50%;
  display: flex;
  flex-direction: column;
  align-items: center;
  transform: translateX(-50%);
  color: #999;
  font-weight: 700;
  opacity: 0.45;
  pointer-events: none;
`;

const WatermarkLogo = styled.span`
  font-family: "DejaVu Sans", sans-serif;
  font-size: 36px;
  line-height: 48px;
`;

const WatermarkUrl = styled.span`
  font-family: "Liberation Sans", sans-serif;
  font-size: 27px;
  line-height: 30px;
`;

const App = () => (
  <Screen dir="rtl">
    <GlobalStyle />
    <TopBar />
    <Ribbon />
    <Workspace dir="ltr">
      <Page $first>
        <Text blocks={pageOne} />
      </Page>
      <Page>
        <Text blocks={pageTwo} />
      </Page>
    </Workspace>
    <Status />
    <Taskbar />
    <Watermark aria-hidden="true">
      <WatermarkLogo>مـسـتـقل</WatermarkLogo>
      <WatermarkUrl dir="ltr">mostaql.com</WatermarkUrl>
    </Watermark>
  </Screen>
);

export default App;
